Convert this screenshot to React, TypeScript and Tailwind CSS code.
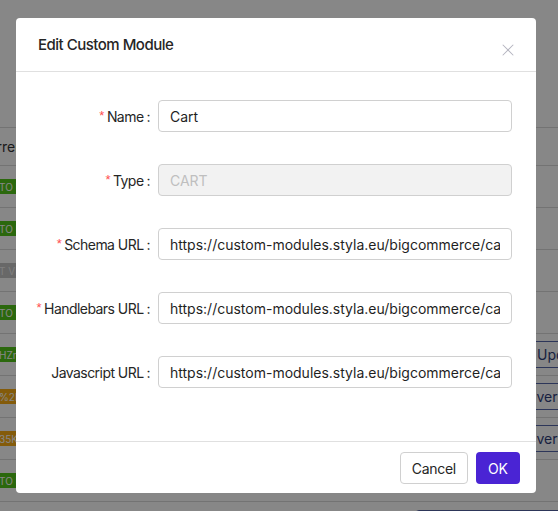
import { X } from "lucide-react";

const FONT = "font-['Inter','Noto_Sans',sans-serif]";

type Row = {
  badge?: { text: string; tone: "green" | "orange" | "gray" };
  action?: string;
};

// visible left edge of each row is cut off by the viewport
const rows: Row[] = [
  { badge: { text: "TO UPDATE", tone: "green" } },
  { badge: { text: "TO UPDATE", tone: "green" } },
  { badge: { text: "T VERSIONED", tone: "gray" } },
  { badge: { text: "TO UPDATE", tone: "green" } },
  { badge: { text: "HZnKd8", tone: "green" }, action: "Update" },
  { badge: { text: "%2F9a1", tone: "orange" }, action: "Set version" },
  { badge: { text: "35Kx2", tone: "orange" }, action: "Set version" },
  { badge: { text: "TO UPDATE", tone: "green" } },
];

const toneClass = {
  green: "bg-[#52c41a] text-white",
  orange: "bg-[#faad14] text-white",
  gray: "bg-[#c4c4c4] text-[#f0f0f0]",
};

function BackgroundPage() {
  return (
    <div className={`h-[511px] overflow-hidden bg-white ${FONT}`}>
      <div className="h-[127px]" />
      <div className="border-t border-[#d9d9d9]">
        <div className="flex h-[38px] items-center border-b border-[#d9d9d9] text-[14px] text-[#333]">
          <span className="-ml-[22px]">Current</span>
        </div>
        {rows.map((row, i) => (
          <div
            key={i}
            className="flex h-[42px] items-center justify-between border-b border-[#d9d9d9]"
          >
            {row.badge ? (
              <span
                className={`-ml-[5px] flex h-[15px] items-center px-[4px] text-[10px] leading-none whitespace-nowrap ${toneClass[row.badge.tone]}`}
              >
                {row.badge.text}
              </span>
            ) : (
              <span />
            )}
            {row.action && (
              <span className="-mr-[40px] flex h-[27px] items-center rounded-[4px] border border-[#5566a8] px-[12px] text-[14px] text-[#2f3e7a] whitespace-nowrap">
                {row.action}
              </span>
            )}
          </div>
        ))}
        <div className="flex justify-end pt-[8px]">
          <div className="-mr-[10px] h-[30px] w-[153px] rounded-[4px] border border-[#5566a8]" />
        </div>
      </div>
    </div>
  );
}

type Field = { label: string; value: string; required?: boolean; disabled?: boolean };

const fields: Field[] = [
  { label: "Name", value: "Cart", required: true },
  { label: "Type", value: "CART", required: true, disabled: true },
  {
    label: "Schema URL",
    value: "https://custom-modules.styla.eu/bigcommerce/cart/schema.json",
    required: true,
  },
  {
    label: "Handlebars URL",
    value: "https://custom-modules.styla.eu/bigcommerce/cart/template.hbs",
    required: true,
  },
  {
    label: "Javascript URL",
    value: "https://custom-modules.styla.eu/bigcommerce/cart/script.js",
  },
];

function EditModal() {
  return (
    <div className={`w-[520px] rounded-[4px] bg-white ${FONT}`}>
      <div className="flex h-[54px] items-start justify-between border-b border-[#e0e0e0] pl-[22px] pr-[20px]">
        <h2 className="pt-[17px] text-[15px] font-medium leading-[20px] tracking-[-0.5px] text-[#262626]">
          Edit Custom Module
        </h2>
        <button className="mt-[24px] text-[#b4b4bf]">
          <X size={16} strokeWidth={1.2} className="h-[16px] w-[16px] scale-[1.25]" />
        </button>
      </div>
      <div className="flex flex-col gap-[32px] px-[24px] pb-[53px] pt-[28px]">
        {fields.map((f) => (
          <div key={f.label} className="flex items-center">
            <label className="flex w-[118px] shrink-0 items-center justify-end whitespace-nowrap text-[14px] tracking-[-0.55px] text-[#262626]">
              {f.required && (
                <span className="mr-[3px] font-['Liberation_Sans',sans-serif] text-[13px] text-[#ff4d4f]">
                  *
                </span>
              )}
              {f.label}
              <span className="ml-[3px] mr-[8px]">:</span>
            </label>
            <input
              readOnly
              disabled={f.disabled}
              value={f.value}
              className={`h-[32px] w-[354px] rounded-[4px] border border-[#d0d0d0] px-[11px] text-[14px] outline-none ${
                f.disabled ? "bg-[#f2f2f2] text-[#bfbfbf]" : "bg-white text-[#1f1f1f]"
              }`}
            />
          </div>
        ))}
      </div>
      <div className="flex justify-end gap-[8px] border-t border-[#e0e0e0] px-[16px] pb-[9px] pt-[10px]">
        <button className="h-[32px] rounded-[4px] border border-[#d0d0d0] bg-white px-[11px] text-[14px] tracking-[-0.3px] text-[#262626]">
          Cancel
        </button>
        <button className="h-[32px] rounded-[4px] bg-[#4a24d4] px-[12px] text-[14px] text-white">
          OK
        </button>
      </div>
    </div>
  );
}

export default function App() {
  return (
    <div className="relative h-[511px] w-[558px] overflow-hidden">
      <BackgroundPage />
      <div className="absolute inset-0 bg-black/[0.47]">
        <div className="pl-[16px] pt-[18px]">
          <EditModal />
        </div>
      </div>
    </div>
  );
}
